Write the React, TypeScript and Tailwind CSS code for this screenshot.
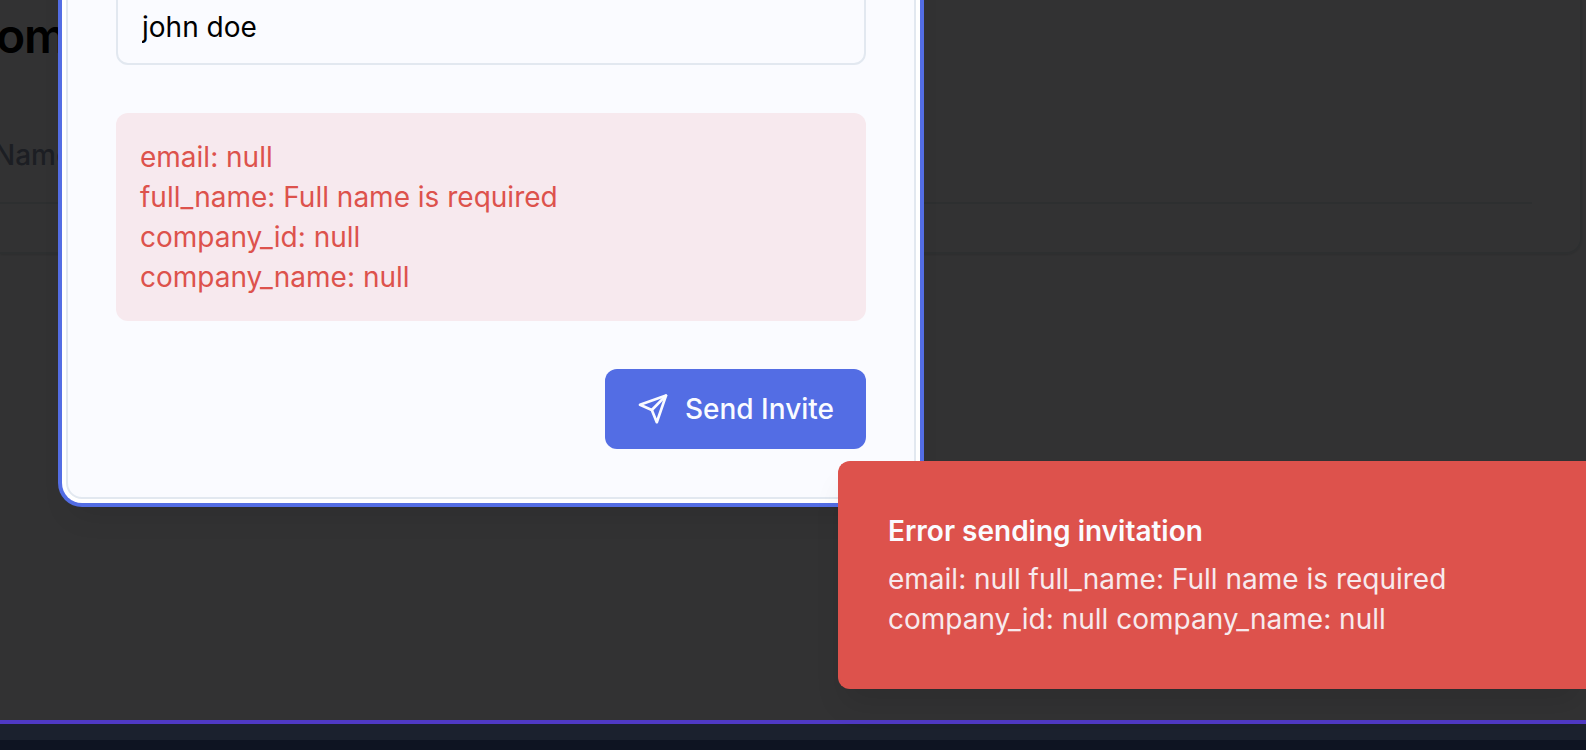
import React from "react";

const errors = [
  "email: null",
  "full_name: Full name is required",
  "company_id: null",
  "company_name: null",
];

function SendIcon() {
  return (
    <svg
      className="size-8 shrink-0"
      viewBox="0 0 32 32"
      fill="none"
      stroke="currentColor"
      strokeWidth="2.7"
      strokeLinecap="round"
      strokeLinejoin="round"
      aria-hidden="true"
    >
      <path d="M29 2.6 3 11.8 14.8 17 19.8 29.2Z" />
      <path d="M29 2.6 14.8 17" />
    </svg>
  );
}

function UsersPage() {
  return (
    <main className="relative flex-1 overflow-hidden bg-[#fafbff] pr-1">
      <section className="h-[254px] rounded-br-2xl border-r-2 border-b-2 border-[#e2e8f0] pr-12 shadow-sm">
        <h1 className="-ml-1 pt-2 text-5xl leading-[56px] font-semibold tracking-tight text-black">
          om
        </h1>
        <table className="mt-[43px] w-full text-left">
          <thead>
            <tr className="h-24 border-b-2 border-[#e2e8f0]">
              <th
                scope="col"
                className="text-[28px] leading-10 font-medium text-[#8c96af]"
              >
                <span className="-ml-1.5">Name</span>
              </th>
            </tr>
          </thead>
        </table>
      </section>
      <div className="absolute inset-0 bg-black/80" />
    </main>
  );
}

function InviteDialog() {
  return (
    <form
      role="dialog"
      aria-label="Send Invite"
      className="absolute -top-[65px] left-[66px] flex w-[850px] flex-col gap-12 rounded-2xl border-2 border-[#e2e8f0] bg-[#fafbff] p-12 shadow-[0_20px_30px_-6px_rgb(0_0_0/0.1)] ring-4 ring-[#536de4] ring-offset-4 ring-offset-white"
    >
      <input
        type="text"
        aria-label="Full name"
        defaultValue="john doe"
        className="h-20 w-full rounded-xl border-2 border-[#e2e8f0] bg-transparent px-6 pt-1 text-[28px] leading-10 text-black outline-none"
      />
      <div
        role="alert"
        className="rounded-xl bg-[#f7e9ee] p-6 text-[28px] leading-10 text-[#dd524c]"
      >
        {errors.map((error) => (
          <p key={error}>{error}</p>
        ))}
      </div>
      <button
        type="button"
        className="flex h-20 items-center gap-4 self-end rounded-xl bg-[#536de4] px-8 text-[28px] leading-10 font-medium text-[#fafbff]"
      >
        <SendIcon />
        Send Invite
      </button>
    </form>
  );
}

function Toast() {
  return (
    <div
      role="status"
      className="absolute right-0 bottom-[61px] left-[838px] flex flex-col gap-2 rounded-l-xl border-2 border-r-0 border-[#dd524c] bg-[#dd524c] p-12 text-[28px] leading-10 text-[#fafbff] shadow-[0_20px_30px_-6px_rgb(0_0_0/0.1)]"
    >
      <p className="font-semibold">Error sending invitation</p>
      <p className="opacity-90">
        email: null full_name: Full name is required
        <br />
        company_id: null company_name: null
      </p>
    </div>
  );
}

export default function App() {
  return (
    <div className="relative flex min-h-screen flex-col overflow-hidden font-['Inter',sans-serif]">
      <UsersPage />
      <footer className="border-t-4 border-[#4f39c4] bg-[#0e1422] pb-2.5">
        <div className="h-4 bg-[#1b212e]" />
      </footer>
      <InviteDialog />
      <Toast />
    </div>
  );
}
